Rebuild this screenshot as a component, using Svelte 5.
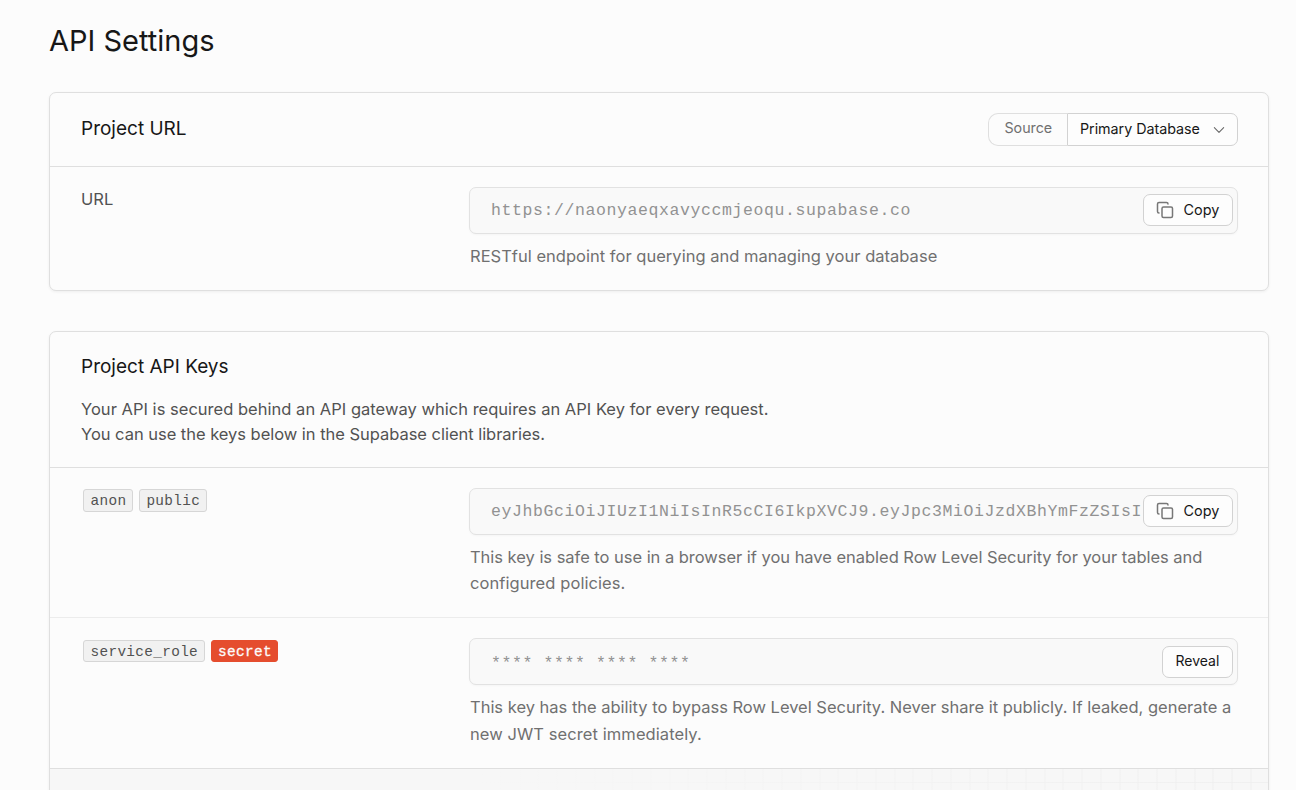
<script>
  const keys = [
    {
      tags: [{ name: 'anon' }, { name: 'public' }],
      value: 'eyJhbGciOiJIUzI1NiIsInR5cCI6IkpXVCJ9.eyJpc3MiOiJzdXBhYmFzZSIsI',
      action: 'Copy',
      lines: [
        'This key is safe to use in a browser if you have enabled Row Level Security for your tables and',
        'configured policies.'
      ]
    },
    {
      tags: [{ name: 'service_role' }, { name: 'secret', danger: true }],
      value: '**** **** **** ****',
      action: 'Reveal',
      lines: [
        'This key has the ability to bypass Row Level Security. Never share it publicly. If leaked, generate a',
        'new JWT secret immediately.'
      ]
    }
  ];
</script>

{#snippet field(value, action)}
  <div class="field">
    <span class="value" class:masked={action === 'Reveal'}>{value}</span>
    <button class="btn" class:reveal={action === 'Reveal'}>
      {#if action === 'Copy'}
        <svg width="18" height="18" viewBox="0 0 24 24" fill="none" stroke="#777" stroke-width="2" stroke-linecap="round" stroke-linejoin="round">
          <rect x="8" y="8" width="14" height="14" rx="2" />
          <path d="M4 16c-1.1 0-2-.9-2-2V4c0-1.1.9-2 2-2h10c1.1 0 2 .9 2 2" />
        </svg>
      {/if}
      <span>{action}</span>
    </button>
  </div>
{/snippet}

<main>
  <h1>API Settings</h1>

  <section class="card first">
    <header class="head">
      <h2>Project URL</h2>
      <div class="source">
        <span class="label">Source</span>
        <button class="select">
          <span>Primary Database</span>
          <svg width="14" height="14" viewBox="0 0 24 24" fill="none" stroke="#666" stroke-width="1.8" stroke-linecap="round" stroke-linejoin="round">
            <path d="m4 8 8 8 8-8" />
          </svg>
        </button>
      </div>
    </header>
    <div class="row url">
      <span class="name">URL</span>
      <div>
        {@render field('https://naonyaeqxavyccmjeoqu.supabase.co', 'Copy')}
        <p class="hint rest">RESTful endpoint for querying and managing your database</p>
      </div>
    </div>
  </section>

  <section class="card keys">
    <header class="intro">
      <h2>Project API Keys</h2>
      <p>
        <span class="wide">Your API is secured behind an API gateway which requires an API Key for every request.</span><br />
        <span class="tight">You can use the keys below in the Supabase client libraries.</span>
      </p>
    </header>
    {#each keys as key}
      <div class="row key">
        <div class="tags">
          {#each key.tags as tag}
            <code class:danger={tag.danger}>{tag.name}</code>
          {/each}
        </div>
        <div>
          {@render field(key.value, key.action)}
          <p class="hint">{key.lines[0]}<br /><span class="last">{key.lines[1]}</span></p>
        </div>
      </div>
    {/each}
    <div class="grid"></div>
  </section>
</main>

<style>
  :global(body) {
    margin: 0;
    background: #fcfcfc;
    overflow: hidden;
  }
  main {
    box-sizing: border-box;
    width: 1296px;
    height: 790px;
    overflow: hidden;
    padding: 23px 27px 0 49px;
    font-family: Inter, sans-serif;
    font-size: 16.5px;
    color: #525252;
  }
  h1, h2, p { margin: 0; font-weight: 400; color: #171717; }
  h1 { font-size: 29px; line-height: 36px; height: 69px; }
  h2 { font-size: 19px; line-height: 26px; }
  .card {
    box-sizing: border-box;
    border: 1px solid #dfdfdf;
    border-radius: 7px;
    background: #fcfcfc;
    box-shadow: 0 1px 3px rgba(0, 0, 0, 0.06);
  }
  .first { height: 199px; margin-bottom: 40px; }
  .head {
    display: flex;
    align-items: center;
    justify-content: space-between;
    box-sizing: border-box;
    height: 74px;
    padding: 0 30px 0 31px;
    border-bottom: 1px solid #dfdfdf;
  }
  .head h2 { padding-bottom: 2px; }
  .source {
    display: flex;
    height: 33px;
    font-size: 14.3px;
    line-height: 28px;
  }
  .label {
    box-sizing: border-box;
    width: 79px;
    padding-left: 15.5px;
    border: 1px solid #dfdfdf;
    border-right: 0;
    border-radius: 10px 0 0 10px;
    color: #707070;
    letter-spacing: -0.05px;
  }
  .select {
    display: flex;
    align-items: center;
    justify-content: space-between;
    box-sizing: border-box;
    width: 171px;
    padding: 0 11px 0 12px;
    border: 1px solid #d2d2d2;
    border-radius: 0 7px 7px 0;
    background: #fdfdfd;
    font: 14.3px Inter, sans-serif;
    letter-spacing: -0.03px;
    color: #171717;
  }
  .select span { padding-bottom: 3px; }
  .row {
    display: grid;
    grid-template-columns: 389px 769px;
    padding: 20px 30px 0;
  }
  .name { padding-left: 1px; line-height: 24px; }
  .field {
    display: flex;
    align-items: center;
    justify-content: space-between;
    box-sizing: border-box;
    height: 47px;
    padding: 0 4px 0 21px;
    border: 1px solid #e2e2e2;
    border-radius: 7px;
    background: #f9f9f9;
    box-shadow: 0 1px 2px rgba(0, 0, 0, 0.03);
  }
  .value {
    font-family: "Liberation Mono", monospace;
    font-size: 16.5px;
    letter-spacing: 0.6px;
    color: #929292;
    white-space: pre;
    width: 651px;
    overflow: hidden;
  }
  .btn {
    display: flex;
    align-items: center;
    box-sizing: border-box;
    flex: none;
    gap: 9.5px;
    width: 90px;
    height: 32px;
    margin-bottom: 1px;
    padding: 0 0 0 12px;
    border: 1px solid #d2d2d2;
    border-radius: 7px;
    background: #fdfdfd;
    font: 14.4px Inter, sans-serif;
    color: #171717;
  }
  .btn span { padding-bottom: 2px; }
  .reveal { width: 71px; margin: 0; padding-left: 12.5px; font-size: 14px; }
  .masked { width: auto; padding-top: 4px; }
  .hint {
    padding: 9px 0 0 1px;
    line-height: 26px;
    letter-spacing: -0.03px;
    color: #707070;
    white-space: nowrap;
  }
  .last { letter-spacing: 0.08px; }
  .rest { letter-spacing: 0.02px; }
  .intro {
    box-sizing: border-box;
    height: 136px;
    padding: 22px 30px 0 31px;
    border-bottom: 1px solid #dfdfdf;
  }
  .intro p { padding-top: 17px; line-height: 25px; color: #525252; }
  .wide { letter-spacing: 0.02px; }
  .tight { letter-spacing: -0.03px; }
  .key {
    box-sizing: border-box;
    height: 150px;
    border-bottom: 1px solid #ececec;
  }
  .key + .key { height: 151px; border-bottom-color: #dfdfdf; }
  .key + .key .hint { line-height: 27px; letter-spacing: -0.01px; }
  .tags { display: flex; gap: 6px; padding: 1px 0 0 3px; align-items: flex-start; }
  code {
    box-sizing: border-box;
    height: 23px;
    padding: 0 5.5px 0 6.5px;
    border: 1px solid #d6d6d6;
    border-radius: 3px;
    background: #f1f1f1;
    font: 14.4px/23px "Liberation Mono", monospace;
    letter-spacing: 0.33px;
    color: #525252;
  }
  .key + .key .tags { padding-top: 2px; }
  .key + .key code { height: 22px; }
  .key + .key .danger {
    border-color: #e54d2e;
    background: #e54d2e;
    color: #fcfcfc;
    -webkit-text-stroke: 0.3px #fcfcfc;
  }
  .grid {
    height: 60px;
    background:
      linear-gradient(90deg, #f7f7f7 35%, rgba(247, 247, 247, 0)),
      repeating-linear-gradient(90deg, transparent 0 17.75px, #eeeeee 17.75px 18.75px) 1.5px 0,
      linear-gradient(transparent 13px, #f0f0f0 13px 14px, transparent 14px),
      #f7f7f7;
  }
</style>
